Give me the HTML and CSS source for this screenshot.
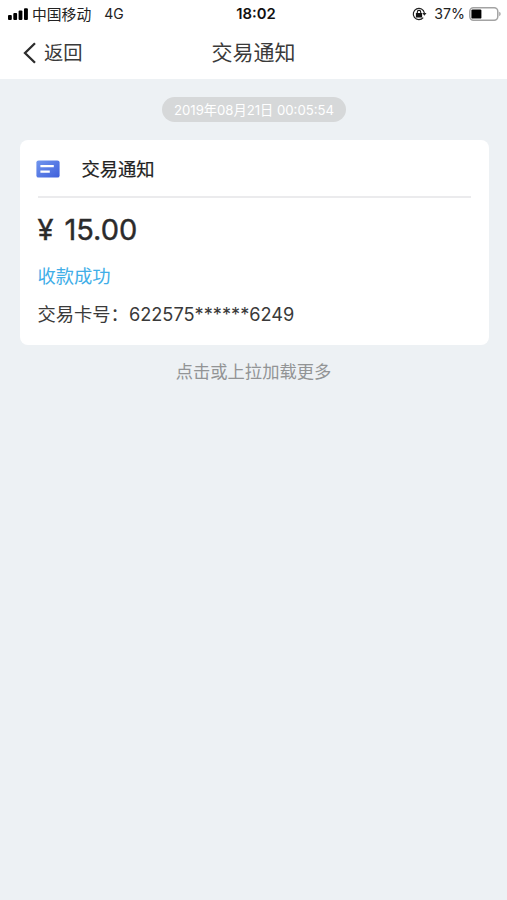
FILE: index.html
```html
<!DOCTYPE html>
<html lang="zh-CN">
<head>
<meta charset="UTF-8">
<meta name="viewport" content="width=device-width, initial-scale=1.0">
<title>交易通知</title>
<link rel="stylesheet" href="styles.css">
</head>
<body>
    <!-- Status bar -->
    <div class="status-bar">
        <div class="status-left">
            <svg class="signal" width="20" height="12" viewBox="0 0 20 12">
                <rect x="0" y="7" width="3.8" height="5" rx="1"/>
                <rect x="5.3" y="5" width="3.8" height="7" rx="1"/>
                <rect x="10.6" y="2.6" width="3.8" height="9.4" rx="1"/>
                <rect x="16" y="0.2" width="3.9" height="11.8" rx="1"/>
            </svg>
            <span class="carrier">中国移动</span>
            <span class="network">4G</span>
        </div>
        <div class="status-time">18:02</div>
        <div class="status-right">
            <svg class="rotation-lock" width="15" height="14" viewBox="0 0 15 14">
                <path d="M11.2 10.6A5.6 5.6 0 1 1 12.4 6" fill="none" stroke="#222" stroke-width="1.2"/>
                <path d="M10.3 5.9h4.2l-2.1 2.9z" fill="#222"/>
                <rect x="3.9" y="6" width="6.2" height="4.4" rx="0.5" fill="#111"/>
                <path d="M5.3 6.5V5.1a1.7 1.7 0 0 1 3.4 0v1.4" fill="none" stroke="#111" stroke-width="1.1"/>
            </svg>
            <span class="percent">37%</span>
            <svg class="battery" width="32" height="14" viewBox="0 0 32 14">
                <rect x="0.8" y="0.8" width="28" height="12.4" rx="3.6" fill="#fff" stroke="#a3a3a3" stroke-width="1.5"/>
                <rect x="2.4" y="2.4" width="10" height="9.2" rx="1.2" fill="#000"/>
                <path d="M30.2 4.8q1.5.6 1.5 2.2t-1.5 2.2z" fill="#a3a3a3"/>
            </svg>
        </div>
    </div>

    <!-- Navigation -->
    <div class="nav-bar">
        <a class="back">
            <svg width="13" height="22" viewBox="0 0 13 22">
                <path d="M12 1.2L2 11l10 9.8" fill="none" stroke="#2c2c2c" stroke-width="2.3"/>
            </svg>
            <span>返回</span>
        </a>
        <h1 class="nav-title">交易通知</h1>
    </div>

    <!-- Message list -->
    <div class="messages">
        <div class="date-pill">2019年08月21日 00:05:54</div>
        <div class="card">
            <div class="card-header">
                <svg class="card-icon" width="24" height="18" viewBox="0 0 24 18">
                    <defs>
                        <linearGradient id="blue" x1="0" y1="0" x2="1" y2="1">
                            <stop offset="0" stop-color="#7196ee"/>
                            <stop offset="1" stop-color="#3e5fdb"/>
                        </linearGradient>
                    </defs>
                    <rect x="0.4" y="0.4" width="23.2" height="17.2" rx="2.2" fill="url(#blue)"/>
                    <path d="M4.4 6.1h13.4M4.4 11.7h9.4" stroke="#fff" stroke-width="2.3"/>
                </svg>
                <h2 class="card-title">交易通知</h2>
            </div>
            <div class="amount"><span>¥</span> <span>15.00</span></div>
            <div class="result">收款成功</div>
            <div class="account"><span>交易卡号：</span><span class="account-number">622575******6249</span></div>
        </div>
        <div class="load-more">点击或上拉加载更多</div>
    </div>
</body>
</html>
```
FILE: styles.css
```css
/* General Reset */
* {
    margin: 0;
    padding: 0;
    box-sizing: border-box;
}

body {
    min-height: 100vh;
    background-color: #edf1f4;
    color: #3a3a3a;
    font-family: Inter, "Noto Sans CJK SC", sans-serif;
}

svg {
    display: block;
    flex-shrink: 0;
}

/* Status Bar */
.status-bar {
    display: grid;
    grid-template-columns: 1fr auto 1fr;
    align-items: center;
    height: 27px;
    padding: 0 6px 0 8px;
    background-color: #fff;
    color: #222;
    font-size: 14px;
    line-height: 27px;
}

.status-left,
.status-right {
    display: flex;
    align-items: center;
}

.status-right {
    justify-content: flex-end;
}

.carrier {
    margin-left: 4px;
    padding-top: 3px;
    font-size: 14.8px;
    line-height: 24px;
}

.network {
    margin-left: 13px;
}

.status-time {
    padding: 2px 0 0 3px;
    color: #111;
    font-size: 14.8px;
    font-weight: 600;
    line-height: 25px;
}

.percent {
    margin: 0 4px 0 7px;
    font-size: 14.2px;
}

/* Navigation */
.nav-bar {
    display: grid;
    grid-template-columns: 1fr auto 1fr;
    align-items: center;
    height: 52px;
    padding: 0 23px;
    background-color: #fff;
}

.back {
    display: flex;
    align-items: center;
    gap: 8px;
    font-size: 19.3px;
    line-height: 28px;
}

.nav-title {
    font-size: 21px;
    font-weight: 400;
    line-height: 30px;
}

/* Messages */
.messages {
    display: flex;
    flex-direction: column;
    align-items: center;
    padding: 18px 18.5px 0 19.5px;
}

.date-pill {
    height: 25px;
    padding: 1px 12px 0;
    border-radius: 13px;
    background-color: #d6d8d9;
    color: #fff;
    font-size: 13.2px;
    line-height: 24px;
}

.card {
    width: 100%;
    height: 204.5px;
    margin-top: 18px;
    padding: 0 18px;
    border-radius: 8px;
    background-color: #fff;
}

.card-header {
    display: flex;
    align-items: center;
    height: 58px;
    padding-top: 1px;
    border-bottom: 2px solid #ebebed;
}

.card-icon {
    margin-left: -2px;
}

.card-title {
    margin-left: 22px;
    padding-top: 1px;
    color: #222;
    font-size: 18.3px;
    font-weight: 400;
    line-height: 28px;
    -webkit-text-stroke: 0.2px #222;
}

.amount {
    display: flex;
    gap: 11px;
    margin-top: 12px;
    color: #2b2b2b;
    font-size: 29px;
    font-weight: 400;
    line-height: 40px;
    -webkit-text-stroke: 0.4px #2b2b2b;
}

.result {
    margin-top: 12px;
    color: #41aee8;
    font-size: 18.3px;
    line-height: 28px;
}

.account {
    display: flex;
    margin-top: 10px;
    font-size: 18.3px;
    line-height: 28px;
}

.account-number {
    font-size: 18.2px;
}

.load-more {
    margin-top: 13px;
    padding-right: 1px;
    color: #929495;
    font-size: 17.3px;
    line-height: 28px;
}
```
